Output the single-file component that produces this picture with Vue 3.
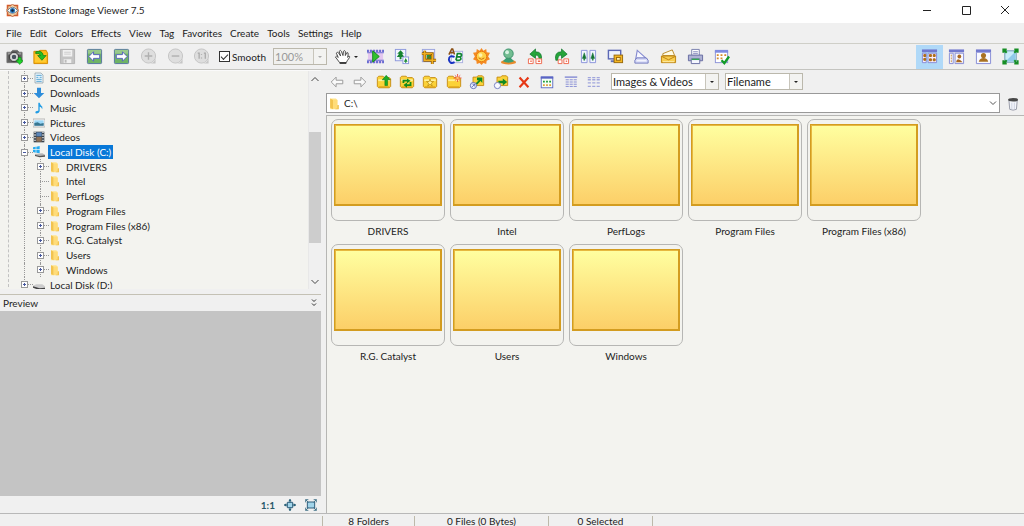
<script setup>
import { ref } from 'vue'

const menus = ['File', 'Edit', 'Colors', 'Effects', 'View', 'Tag', 'Favorites', 'Create', 'Tools', 'Settings', 'Help']

const folderShape = '<path d="M1.500 5V4L3 2.500h5L9.500 4h5.500L16.500 5.500V14L15 15.500H3L1.500 14z" fill="#fbd238" stroke="#c48a10"/><path d="M2.500 6h13v2h-13z" fill="#fff29a"/><path d="M3 14.500h12" stroke="#d99812"/>'
const zoomShape = '<circle cx="9" cy="8.500" r="7.500" fill="#dedede" stroke="#c4c4c4"/><path d="M11 16.500h5.500V11c-1 3-3 5-5.500 5.500z" fill="#c6c6c6"/>'
const greenBox = '<rect x="1.500" y="1.500" width="15" height="15" rx="1" fill="#6fb465" stroke="#5472a0"/><path d="M2 2h14v4H2z" fill="#98c98c"/>'
const windowShape = '<rect x="2.500" y="3.500" width="13" height="12" fill="#fff" stroke="#8c93d8"/><rect x="2" y="2" width="14" height="3" fill="#7f8be0"/>'

const art = {
  logo: '<path d="M1 1h16v16H1z" fill="#e8602c"/><path d="M9 0l2.600 2.600h3.800v3.800L18 9l-2.600 2.600v3.800h-3.800L9 18l-2.600-2.600H2.600v-3.800L0 9l2.600-2.600V2.600h3.800z" fill="#f3cfa2" stroke="#a8552f"/><path d="M2 9q7-9 14 0-7 8-14 0z" fill="#fff" stroke="#3c5878"/><circle cx="9" cy="9" r="3.500" fill="#2278bd"/><circle cx="9" cy="9" r="1.700" fill="#101c33"/>',
  camera: '<path d="M1 4.500h4l2-2h5l2 2h3v11H1z" fill="#606060" stroke="#777"/><path d="M2 5h14v2H2z" fill="#999"/><circle cx="8.500" cy="9.500" r="5" fill="#bbb" stroke="#333"/><circle cx="8.500" cy="9.500" r="3" fill="#4a525e" stroke="#eee"/><path d="M13 10h3v3h2.500L14.500 17.500 10.500 13H13z" fill="#20d52a" stroke="#09830f" stroke-width=".5"/>',
  open: '<path d="M2 3.500h5l1.500-1H15l1.500 3v11H2z" fill="#fcb915" stroke="#d48a00"/><path d="M3 6h5l1 1h6v8H3z" fill="#ffca32"/><path d="M4 4q7-2 8 4h3l-4.500 5L6 8h3Q8 5 4 6z" fill="#25bd26" stroke="#087611" stroke-width=".7"/>',
  save: '<path d="M1.500 1.500h15v15h-15z" fill="#c4c4c4" stroke="#b4b4b4"/><path d="M4 2h10v7H4zM5 12h8v4H5z" fill="#f0f0f0"/><path d="M5.500 4.500h7M5.500 6.500h7" stroke="#ccc"/><path d="M6 12.500h2v3H6z" fill="#bbb"/>',
  prev: greenBox + '<path d="M3 9l5-5v3h6.500v4H8v3z" fill="#fff" stroke="#5260bd"/>',
  next: greenBox + '<path d="M15 9l-5-5v3H3.500v4H10v3z" fill="#fff" stroke="#5260bd"/>',
  zoomin: zoomShape + '<path d="M5 8.500h8M9 4.500v8" stroke="#b0b0b0" stroke-width="1.500"/>',
  zoomout: zoomShape + '<path d="M5 8.500h8" stroke="#b0b0b0" stroke-width="1.500"/>',
  actual: zoomShape + '<path d="M5 5.500h1.500v6M11.500 5.500H13v6M9 6.500v1M9 10v1" fill="none" stroke="#a8a8a8" stroke-width="1.300"/>',
  hand: '<path d="M6 15.500L1.500 9.500q1-2 3 .500L2.500 5.500q1-2 2.200-.500L7 8.500 5.500 3.500q1.200-2 2.300 0L9.500 8l.5-4.500q1.500-1.500 2 0V8l1.500-3q1.800-.500 1.500 1.500L14.500 10l1-1.500q1.500 0 1 1.500L14 13.500l-1 2z" fill="#fff" stroke="#444"/><path d="M6 16h7" stroke="#222" stroke-width="1.500"/>',
  slideshow: '<path d="M1 2h16v14H1z" fill="#e3c6ef"/><path d="M0 3h18M0 15h18" stroke="#686dd0" stroke-width="2.500" stroke-dasharray="2 1.200"/><path d="M0 5h18M0 13h18" stroke="#686dd0"/><path d="M6 3l7 6-7 6z" fill="#31c12d" stroke="#178a20"/>',
  resize: '<rect x="2.500" y="1.500" width="11" height="12" fill="#f1f4ff" stroke="#8c98dc"/><path d="M8 2.500L4.500 6h2L4 9.500h3V12h2V9.500h3L9.500 6h2z" fill="#168430"/><rect x="10.500" y="9.500" width="6" height="7" fill="#fff" stroke="#8c98dc"/><path d="M13.500 10.500l-2 4H13V16h1v-1.500h1.500z" fill="#1d8b38"/>',
  crop: '<rect x="2.500" y="1.500" width="13" height="13" fill="#f3f3ff" stroke="#9aa3dd"/><path d="M7 7h5v5H7z" fill="#29913e"/><path d="M5 3v10h12M2 6h11v11" fill="none" stroke="#8e5900" stroke-width="3"/><path d="M5 3v10h12M2 6h11v11" fill="none" stroke="#f0b020" stroke-width="1.500"/><path d="M7 12l6-6" stroke="#8e5900"/>',
  drawing: '<rect x="4.500" y="3.500" width="12" height="12" fill="#f8f8ff" stroke="#aab0e0"/><path d="M2 7l3-6h1l2 6M3.500 5h4" fill="none" stroke="#8b5014" stroke-width="1.600"/><path d="M8 9.500Q2 7 2 12.500q1 5 6 2.500" fill="none" stroke="#1732c2" stroke-width="2"/><path d="M9.500 13l1.500-7h3q3 1 0 3.500h-3.500M11 9.500h3q2 2.500-1 3.500H9.500" fill="none" stroke="#108432" stroke-width="1.800"/>',
  adjust: '<path d="M9 0l2 3 3-2 .500 3.500L18 5l-2 4 2 3-3.500 1.500L14 17l-3-1-2 2-2-2-3 1-.500-3.500L0 12l2-3-2-4 3.500-.500L4 1l3 2z" fill="#f48a22"/><circle cx="9" cy="9" r="5.500" fill="#ffd24a" stroke="#e87810"/><circle cx="8" cy="7.500" r="2" fill="#fff3aa"/><path d="M6 10.500q3 3 6 0" fill="none" stroke="#c86910"/>',
  clone: '<ellipse cx="9" cy="15" rx="8" ry="2.500" fill="#e98b2e"/><path d="M7 10h4l4 4q-6 3-12 0z" fill="#3a9f73"/><circle cx="9" cy="6" r="5" fill="#72bd91" stroke="#399169"/><circle cx="7.500" cy="4.500" r="2" fill="#d9f3e3"/>',
  rotleft: '<path d="M15 13q2-9-6-9V1L3 6.500 9 11V7.500q4 0 4 5.500z" fill="#26a43a" stroke="#087025" stroke-width=".7"/><path d="M1.500 11.500h5v5h-5zM9.500 11.500h6v5h-6z" fill="#fff" stroke="#ef694f"/><path d="M3.500 14h1.500M11.500 14H14" stroke="#ef694f" stroke-width="1.500"/>',
  rotright: '<path d="M3 13Q1 4 9 4V1l6 5.500L9 11V7.500q-4 0-4 5.500z" fill="#26a43a" stroke="#087025" stroke-width=".7"/><path d="M5.500 12.500h4v4h-4zM11.500 11.500h5v5h-5z" fill="#fff" stroke="#ef694f"/><path d="M13.500 14h1.500" stroke="#ef694f" stroke-width="1.500"/>',
  compare: '<path d="M1.500 2.500h6v13h-6zM10.500 2.500h6v13h-6z" fill="#f3f6ff" stroke="#8a93da"/><path d="M4.500 5L2.500 11H4v2h1v-2h1.500zM13.500 5l-2 6H13v2h1v-2h1.500z" fill="#167434" stroke="#167434" stroke-width=".5"/>',
  wallpaper: '<rect x="1.500" y="2.500" width="13" height="9" fill="#eef3ff" stroke="#5c68b5" stroke-width="1.500"/><path d="M4 14h5" stroke="#6270b8" stroke-width="2"/><rect x="7.500" y="7.500" width="9" height="8" fill="#f5b824" stroke="#99690b"/><rect x="10" y="10" width="4" height="3" fill="#fff1b5" stroke="#99690b"/>',
  scan: '<path d="M4.500 2.500L14 11H3z" fill="#f8f8ff" stroke="#858bd0" stroke-width="1.200"/><path d="M2 13l2-2.500h10l2 2.500v3H2z" fill="#d7daf7" stroke="#7278be"/><path d="M4 13.500h10" stroke="#fff"/>',
  email: '<path d="M3 6l10-4 2.500 6H3z" fill="#fffbe5" stroke="#b98a28"/><path d="M1.500 8.500h15v7h-15z" fill="#f8cd50" stroke="#bd820d"/><path d="M2 9l7 3.500L16 9" fill="none" stroke="#bd820d"/><path d="M3 14.500h12" stroke="#fff0b0"/>',
  print: '<path d="M5 1.500h8V8H5z" fill="#fff" stroke="#777dac"/><path d="M1.500 7.500h15v6h-15z" fill="#adb1d4" stroke="#666ba0"/><path d="M4.500 11.500h9v5h-9z" fill="#f5f6ff" stroke="#666ba0"/><path d="M6.500 4h5M6.500 6h5" stroke="#8185ba"/><path d="M5 12h8" stroke="#33a653" stroke-width="1.500"/>',
  batch: windowShape + '<path d="M4 7.500h2M8 7.500h2M12 7.500h2M4 11h2M8 11h2" stroke="#d48c2c" stroke-width="2"/><path d="M9 13l3 3 5-7" fill="none" stroke="#149b29" stroke-width="2.500"/>',
  browser: '<path d="M1 3h16" stroke="#7078ce" stroke-width="3"/><path d="M1.500 5.500h4v10h-4zM7.500 5.500h9v10h-9z" fill="#f9efff" stroke="#858bd4"/><path d="M3 7h2v2H3zM3 11h2v2H3zM9 7h2v2H9zM13 7h2v2h-2zM9 11.500h2v2H9zM13 11.500h2v2h-2z" fill="#c57810" stroke="#a46510"/>',
  windowed: '<path d="M1 3h16" stroke="#7078ce" stroke-width="3"/><path d="M1.500 5.500h4v11h-4zM7.500 5.500h9v11h-9z" fill="#f9f9ff" stroke="#858bd4"/><path d="M3.500 7v9" stroke="#c5934d" stroke-dasharray="2 1"/><circle cx="12" cy="9" r="2" fill="#a86720"/><path d="M8.500 15q1-6 7 0z" fill="#a86720"/>',
  viewer: '<path d="M1 3h16" stroke="#7078ce" stroke-width="3"/><path d="M1.500 4.500v12h15v-12z" fill="#f9f9ff" stroke="#858bd4"/><circle cx="9" cy="8" r="2.700" fill="#a97122"/><path d="M4 14.500q1-4 5-4t5 4z" fill="#a97122"/>',
  fullscreen: '<rect x="3" y="3" width="12" height="12" fill="#c8ecfb" stroke="#6796b2"/><path d="M4 14L14 4v10z" fill="#8fc9ea"/><path d="M5 1.500H1.500V5M13 1.500h3.500V5M1.500 13v3.500H5M16.500 13v3.500H13M2 2l3 3M16 2l-3 3M2 16l3-3M16 16l-3-3" fill="none" stroke="#168e25" stroke-width="2.200"/>',
  back: '<path d="M2.500 9L8 3.500V7h7.500v4H8v3.500z" fill="#fafafa" stroke="#919191"/>',
  forward: '<path d="M15.500 9L10 3.500V7H2.500v4H10v3.500z" fill="#fafafa" stroke="#919191"/>',
  up: folderShape + '<path d="M10 13V6.500H7L11.500 1.500 16 6.500h-3V13z" fill="#1cac25" stroke="#087316" stroke-width=".6"/>',
  refresh: folderShape + '<path d="M5 10V7.500h5M13 9v3.500H8" fill="none" stroke="#138b1c" stroke-width="2"/><path d="M9 5l4 2.500-4 3zM9 9.500l-4 3 4 3z" fill="#138b1c"/>',
  favorite: folderShape + '<path d="M9 5.500l1 3h3l-2.500 2 1 3-2.500-2-2.500 2 1-3-2.500-2h3z" fill="#fff4a0" stroke="#b98500" stroke-width=".8"/>',
  newfolder: folderShape + '<path d="M13 0v9M8.500 4.500h9M10 1.500l6 6M16 1.500l-6 6" stroke="#ee4e37"/><circle cx="13" cy="4.500" r="1.500" fill="#ffc16e"/>',
  copyto: '<path d="M4.500 3.500h4L10 2h5l1.500 1.500V13h-12z" fill="#fbd238" stroke="#c48a10"/><path d="M7 11l4-4H9V4h6v6l-2-2-4 4z" fill="#108a22"/><circle cx="5" cy="13" r="3.500" fill="#eaf0ff" stroke="#5966b0"/><path d="M3.500 14.500l3-3M4 11.500h2.500V14" fill="none" stroke="#5966b0"/>',
  moveto: '<path d="M4.500 3.500h4L10 2h5l1.500 1.500V13h-12z" fill="#fbd238" stroke="#c48a10"/><path d="M6 7.500h5V5l5 4-5 4v-2.500H6z" fill="#108a22"/><circle cx="5" cy="13" r="3.500" fill="#f8faff" stroke="#6b75bd"/>',
  delete: '<path d="M4 4l10 11M14 4L4 15" stroke="#e63816" stroke-width="2.400"/>',
  thumbs: '<rect x="2.500" y="3.500" width="13" height="12" fill="#f5fff3" stroke="#5964c4"/><path d="M2 4h14" stroke="#5964c4" stroke-width="2.500"/><path d="M4.500 8.500h2M8 8.500h2M11.500 8.500h2" stroke="#1b9a38" stroke-width="2"/><path d="M4.500 12.500h2M8 12.500h2M11.500 12.500h2" stroke="#e09a3a" stroke-width="2"/>',
  details: '<path d="M2 3.500h14" stroke="#7d84d2" stroke-width="1.500"/><path d="M3 6.500h13M3 9h13M3 11.500h13M3 14h13" stroke="#7d84d2" stroke-dasharray="3.500 1"/>',
  list: '<path d="M2 4h14M2 6.500h14M2 10h14M2 14h14" stroke="#a0a5dc" stroke-width="1.500" stroke-dasharray="3.500 1.500"/>',
  trash: '<path d="M3.500 5l1 11q4 2 8 0l1-11z" fill="#f4f6fb" stroke="#8a8e9c"/><ellipse cx="8.500" cy="4.500" rx="6" ry="2" fill="#484848"/><path d="M7 8v8M10 8v8" stroke="#c8cddd"/>',
  documents: '<path d="M3 1.500h9l3 3v12H3z" fill="#eaf6fd" stroke="#8496a0"/><path d="M5 5h8M5 8h3M10 8h3M5 11h8M5 14h8" stroke="#58a6d3" stroke-width="1.500"/>',
  downloads: '<path d="M6 1h6v8h5l-8 8-8-8h5z" fill="#2d8dda"/>',
  music: '<path d="M8 1h2q1 4 4 6v4l-2-3-2-1v7q-1 4-6 3-2-4 4-4z" fill="#239de5"/>',
  pictures: '<path d="M0 3h18v12H0z" fill="#f9f9f9" stroke="#9c9c9c"/><path d="M2 5h14v8H2z" fill="#9bd7f7"/><path d="M2 9l5-1 4 2 5-1v4H2z" fill="#397690"/>',
  videos: '<path d="M1 1h16v16H1z" fill="#39444e"/><path d="M5 2h8v6H5z" fill="#5b86b8"/><path d="M5 9h8v7H5z" fill="#8e7055"/><path d="M3 1v16M15 1v16" stroke="#eee" stroke-width="2" stroke-dasharray="2 2"/>',
  windisk: '<path d="M0 2l4-1v4H0zM5 1l5-1v5H5zM0 6h4v4L0 9zM5 6h5v5l-5-1z" fill="#24aaf0"/><path d="M3 12l11-1 4 2v2l-8 1-7-3z" fill="#b4b4b4"/><path d="M3 13l7 2v2l-7-2zM10 15l8-1v2l-8 1z" fill="#545454"/>',
  disk: '<path d="M0 10l5-2h9l4 3v3l-8 2L0 12z" fill="#ccc"/><path d="M0 11l10 3v3L0 13zM10 14l8-1v2l-8 2z" fill="#444"/>',
  folder: '<path d="M3 2h8l2 2v13H3z" fill="#ffe58e"/><path d="M3 2l4 2v13l-4-2zM13 11h2v6h-5z" fill="#f2c34f"/><path d="M7 4h6v12H7z" fill="#ffdc79"/>',
  fit: '<path d="M5 5h8v8H5z" fill="#a1d4e9" stroke="#315f7d" stroke-width="1.500"/><path d="M9 0v5M9 13v5M0 9h5M13 9h5" fill="none" stroke="#286078" stroke-width="1.500"/><path d="M6.500 3.500h5L9 0zM6.500 14.500h5L9 18zM3.500 6.500v5L0 9zM14.500 6.500v5L18 9z" fill="#286078"/>',
  stretch: '<path d="M3.500 4.500h11v9h-11z" fill="#a1d4e9" stroke="#315f7d" stroke-width="1.500"/><path d="M1 5V1h4M13 1h4v4M1 13v4h4M17 13v4h-4M1 1l4 4M17 1l-4 4M1 17l4-4M17 17l-4-4" fill="none" stroke="#286078" stroke-width="1.200"/>'
}

const fileTools = [['camera', 'Acquire'], ['open', 'Open'], ['save', 'Save'], ['prev', 'Previous'], ['next', 'Next'], ['zoomin', 'Zoom in'], ['zoomout', 'Zoom out'], ['actual', 'Actual size']]
const editTools = [['slideshow', 'Slide show'], ['resize', 'Resize'], ['crop', 'Crop'], ['drawing', 'Draw'], ['adjust', 'Lighting'], ['clone', 'Clone'], ['rotleft', 'Rotate left'], ['rotright', 'Rotate right'], ['compare', 'Compare'], ['wallpaper', 'Wallpaper'], ['scan', 'Scan'], ['email', 'Email'], ['print', 'Print'], ['batch', 'Batch convert']]
const viewTools = [['browser', 'Browser'], ['windowed', 'Windowed'], ['viewer', 'Viewer'], ['fullscreen', 'Full screen']]
const folderTools = [['back', 'Back'], ['forward', 'Forward'], ['up', 'Up'], ['refresh', 'Refresh'], ['favorite', 'Favorites'], ['newfolder', 'New folder'], ['copyto', 'Copy to'], ['moveto', 'Move to'], ['delete', 'Delete'], ['thumbs', 'Thumbnails'], ['details', 'Details'], ['list', 'List']]

const tree = [
  { name: 'Documents', icon: 'documents', box: '+' },
  { name: 'Downloads', icon: 'downloads', box: '+' },
  { name: 'Music', icon: 'music', box: '+' },
  { name: 'Pictures', icon: 'pictures', box: '+' },
  { name: 'Videos', icon: 'videos', box: '+' },
  { name: 'Local Disk (C:)', icon: 'windisk', box: '-' },
  { name: 'DRIVERS', icon: 'folder', box: '+', child: true },
  { name: 'Intel', icon: 'folder', child: true },
  { name: 'PerfLogs', icon: 'folder', child: true },
  { name: 'Program Files', icon: 'folder', box: '+', child: true },
  { name: 'Program Files (x86)', icon: 'folder', box: '+', child: true },
  { name: 'R.G. Catalyst', icon: 'folder', box: '+', child: true },
  { name: 'Users', icon: 'folder', box: '+', child: true },
  { name: 'Windows', icon: 'folder', box: '+', child: true },
  { name: 'Local Disk (D:)', icon: 'disk', box: '+' }
]
const folders = tree.filter((row) => row.child).map((row) => row.name)
const selected = ref('Local Disk (C:)')
const mode = ref('browser')
const smooth = ref(true)
const path = ref('C:\\')
</script>

<template>
  <div class="app">
    <header class="titlebar">
      <svg class="logo" viewBox="0 0 18 18" v-html="art.logo"></svg>
      <h1>FastStone Image Viewer 7.5</h1>
      <div class="caption">
        <button aria-label="Minimize"><svg viewBox="0 0 10 10"><path d="M1 5.500h8" /></svg></button>
        <button aria-label="Maximize"><svg viewBox="0 0 10 10"><path d="M1.500 1.500h8v8h-8z" /></svg></button>
        <button aria-label="Close"><svg viewBox="0 0 10 10"><path d="M1 1l8 8M9 1L1 9" /></svg></button>
      </div>
    </header>

    <nav class="menubar">
      <button v-for="m in menus" :key="m">{{ m }}</button>
    </nav>

    <div class="toolbar">
      <div class="group file-group">
        <button v-for="[id, label] in fileTools" :key="id" class="tool" :aria-label="label">
          <svg viewBox="0 0 18 18" v-html="art[id]"></svg>
        </button>
      </div>
      <label class="smooth"><input v-model="smooth" type="checkbox" />Smooth</label>
      <div class="combo zoom">
        <select aria-label="Zoom" disabled><option>100%</option></select>
        <span class="drop"></span>
      </div>
      <button class="tool hand" aria-label="Pan"><svg viewBox="0 0 18 18" v-html="art.hand"></svg></button>
      <button class="more" aria-label="Pan options"><i class="caret"></i></button>
      <div class="group edit-group">
        <button v-for="[id, label] in editTools" :key="id" class="tool" :aria-label="label">
          <svg viewBox="0 0 18 18" v-html="art[id]"></svg>
        </button>
      </div>
      <div class="group view-group">
        <button v-for="[id, label] in viewTools" :key="id" class="tool mode" :class="{ active: mode === id }" :aria-label="label" @click="mode = id">
          <svg viewBox="0 0 18 18" v-html="art[id]"></svg>
        </button>
      </div>
    </div>

    <main class="main">
      <aside class="side">
        <div class="tree-pane">
          <ul class="tree">
            <li v-for="row in tree" :key="row.name" :class="{ child: row.child }">
              <span class="joint"><span v-if="row.box" class="box" :class="{ open: row.box === '-' }"></span></span>
              <svg class="tree-icon" viewBox="0 0 18 18" v-html="art[row.icon]"></svg>
              <button class="node" :class="{ selected: selected === row.name }" @click="selected = row.name">{{ row.name }}</button>
            </li>
          </ul>
          <div class="scroll">
            <button aria-label="Scroll up"><svg viewBox="0 0 8 6"><path d="M.500 5L4 1.500 7.500 5" /></svg></button>
            <div class="track"><div class="thumb"></div></div>
            <button aria-label="Scroll down"><svg viewBox="0 0 8 6"><path d="M.500 1L4 4.500 7.500 1" /></svg></button>
          </div>
        </div>
        <section class="preview">
          <div class="preview-head">
            <h2>Preview</h2>
            <button aria-label="Collapse preview"><svg viewBox="0 0 6 8"><path d="M1 .500l2 2 2-2M1 4.500l2 2 2-2" /></svg></button>
          </div>
          <div class="preview-area"></div>
          <div class="preview-tools">
            <button class="one">1:1</button>
            <button class="tool" aria-label="Best fit"><svg viewBox="0 0 18 18" v-html="art.fit"></svg></button>
            <button class="tool" aria-label="Stretch"><svg viewBox="0 0 18 18" v-html="art.stretch"></svg></button>
          </div>
        </section>
      </aside>

      <section class="browser">
        <div class="browse-bar">
          <div class="group folder-group">
            <button v-for="[id, label] in folderTools" :key="id" class="tool" :aria-label="label">
              <svg viewBox="0 0 18 18" v-html="art[id]"></svg>
            </button>
          </div>
          <div class="combo filter">
            <select aria-label="File filter"><option>Images &amp; Videos</option></select>
            <span class="drop"></span>
          </div>
          <div class="combo sort">
            <select aria-label="Sort by"><option>Filename</option></select>
            <span class="drop"></span>
          </div>
        </div>
        <div class="path-row">
          <div class="path">
            <svg class="path-icon" viewBox="0 0 18 18" v-html="art.folder"></svg>
            <input v-model="path" aria-label="Path" />
            <button aria-label="Path history"><svg viewBox="0 0 8 6"><path d="M1 1.500l3 3 3-3" /></svg></button>
          </div>
          <button class="tool trash" aria-label="Recycle bin"><svg viewBox="0 0 18 18" v-html="art.trash"></svg></button>
        </div>
        <div class="grid">
          <figure v-for="name in folders" :key="name">
            <div class="card"><div class="picture"></div></div>
            <figcaption>{{ name }}</figcaption>
          </figure>
        </div>
      </section>
    </main>

    <footer class="status">
      <span class="lead"></span>
      <span class="count">8 Folders</span>
      <span class="files">0 Files (0 Bytes)</span>
      <span class="chosen">0 Selected</span>
      <span class="rest"></span>
    </footer>
  </div>
</template>

<style>
html, body { background: #f0f0f0; }
body { margin: 0; overflow: hidden; }
</style>

<style scoped>
.app, .app * { box-sizing: border-box; }
.app {
  height: 100vh;
  display: flex;
  flex-direction: column;
  background: #f0f0f0;
  color: #1c1c1c;
  font: 10px/14px Lato, "Open Sans", sans-serif;
}
button, input, select { font: inherit; color: inherit; margin: 0; padding: 0; border: 0; background: none; border-radius: 0; }
h1, h2, ul, figure { margin: 0; padding: 0; font-size: 10px; font-weight: 400; }
svg { display: block; }

.titlebar { flex: none; height: 23px; display: flex; align-items: center; gap: 4px; padding: 0 0 3px 6px; background: #fff; }
.logo { width: 13px; height: 13px; }
.caption { margin-left: auto; display: flex; height: 20px; }
.caption button { width: 39px; display: flex; align-items: center; justify-content: center; }
.caption svg { width: 10px; height: 10px; fill: none; stroke: #222; }

.menubar { flex: none; height: 21px; display: flex; align-items: center; gap: 8px; padding-left: 6px; border-bottom: 1px solid #cfcfc8; }

.toolbar { flex: none; height: 26px; display: flex; align-items: center; padding-left: 5px; border-bottom: 1px solid #c4c4c0; }
.group { display: flex; align-items: center; justify-content: space-between; }
.tool { flex: none; width: 18px; height: 18px; display: flex; align-items: center; justify-content: center; }
.tool svg { width: 17px; height: 17px; }
.file-group { width: 206px; }
.edit-group { width: 365px; margin-left: 5px; }
.view-group { margin-left: auto; }
.mode { width: 27px; height: 24px; }
.mode.active { background: #b0d9f8; }
.smooth { display: flex; align-items: center; gap: 2px; width: 54px; margin-left: 8px; }
.smooth input { appearance: none; width: 11px; height: 11px; border: 1px solid #333; background: #fff; display: grid; place-items: center; }
.smooth input:checked::before { content: ""; width: 6px; height: 3px; border: solid #333; border-width: 0 0 1px 1px; transform: translateY(-1px) rotate(-45deg); }
.combo { display: flex; height: 17px; border: 1px solid #bbb8ac; background: #fff; font-size: 11px; }
.combo select { flex: 1; min-width: 0; appearance: none; padding-left: 1px; outline: 0; }
.drop { width: 13px; border-left: 1px solid #c8c5bb; background: #f3f3f1; display: grid; place-items: center; pointer-events: none; }
.drop::before, .caret { content: ""; border: 2px solid transparent; border-top-color: #222; border-bottom: 0; }
.zoom { width: 54px; background: #f0f0ee; }
.zoom select { color: #999; opacity: 1; }
.zoom .drop::before { border-top-color: #aaa; }
.hand { margin-left: 6px; }
.more { width: 10px; height: 18px; display: grid; place-items: center; }

.main { flex: 1; min-height: 0; display: flex; }
.side { flex: none; width: 321px; display: flex; flex-direction: column; margin-right: 5px; }
.tree-pane { flex: none; height: 219px; display: flex; overflow: hidden; border-top: 1px solid #fafafa; background: #f3f3ef; }
.tree { flex: 1; height: 221px; display: grid; grid-template-rows: repeat(15, 1fr); list-style: none; margin-left: 8px; border-left: 1px dashed #c2c2c2; }
.tree li { display: flex; align-items: stretch; min-height: 0; padding-left: 11px; }
.tree li.child::before { content: ""; width: 15px; margin-left: 4px; margin-right: -4px; border-left: 1px dotted #999; }
.joint { flex: none; width: 13px; display: grid; grid-template-columns: 4px 9px; align-items: center; }
.joint::before { content: ""; grid-area: 1 / 2; align-self: stretch; border-left: 1px dotted #999; }
.joint::after { content: ""; grid-area: 1 / 2; border-top: 1px dotted #999; }
.box { grid-area: 1 / 1 / 2 / 3; margin-left: 1px; z-index: 1; width: 7px; height: 7px; border: 1px solid #999; background: linear-gradient(#46589e, #46589e) center / 3px 1px no-repeat, linear-gradient(#46589e, #46589e) center / 1px 3px no-repeat, #fff; }
.box.open { background: linear-gradient(#46589e, #46589e) center / 3px 1px no-repeat, #fff; }
.tree-icon { flex: none; align-self: center; width: 12px; height: 12px; margin-right: 3px; }
.node { align-self: center; height: 14px; padding: 0 2px; white-space: nowrap; line-height: 14px; }
.node.selected { background: #0878d8; color: #fff; }
.scroll { flex: none; width: 13px; display: flex; flex-direction: column; background: #f0f0f0; border-left: 1px solid #e8e8e8; }
.scroll button { height: 15px; display: grid; place-items: center; }
.scroll svg { width: 8px; height: 6px; fill: none; stroke: #444; }
.track { flex: 1; padding-top: 46px; }
.thumb { height: 111px; background: #cdcdcd; }

.preview { flex: 1; min-height: 0; display: flex; flex-direction: column; margin-top: 5px; border-top: 1px solid #c4c1b5; }
.preview-head { flex: none; height: 16px; display: flex; align-items: center; justify-content: space-between; padding: 0 4px 0 3px; }
.preview-head svg { width: 6px; height: 8px; fill: none; stroke: #333; }
.preview-area { flex: 1; background: #c4c4c4; }
.preview-tools { flex: none; height: 17px; display: flex; align-items: center; justify-content: flex-end; gap: 3px; padding-right: 1px; }
.preview-tools svg { width: 12px; height: 12px; }
.one { font-weight: 700; color: #28586a; margin-right: 3px; }

.browser { flex: 1; min-width: 0; display: flex; flex-direction: column; }
.browse-bar { flex: none; height: 23px; display: flex; align-items: center; padding-left: 2px; }
.browse-bar .tool svg { width: 16px; height: 16px; }
.folder-group { width: 275px; }
.filter { width: 108px; margin-left: 8px; }
.sort { width: 78px; margin-left: 6px; }
.path-row { flex: none; display: flex; align-items: center; gap: 4px; }
.path { flex: 1; height: 20px; display: flex; align-items: center; background: #fff; border: 1px solid #999; }
.path-icon { width: 13px; height: 13px; margin: 0 3px 0 1px; }
.path input { flex: 1; min-width: 0; outline: 0; }
.path button { width: 13px; height: 16px; display: grid; place-items: center; }
.path button svg { width: 8px; height: 6px; fill: none; stroke: #555; }
.trash { margin-right: 2px; }
.trash svg { width: 15px; height: 15px; }
.grid { flex: 1; min-height: 0; margin-top: 2px; padding: 3px 4px; display: grid; grid-template-columns: repeat(auto-fill, 114px); grid-auto-rows: 120px; gap: 5px; align-content: start; background: #f3f3ef; border: solid #b6b6b4; border-width: 1px 0 0 1px; }
.card { height: 102px; padding: 4px 2px; border: 1px solid #b6b6b4; border-radius: 7px; }
.picture { height: 82px; border: solid #d39c20; border-width: 1px 2px 2px 1px; background: linear-gradient(#ffffa0, #fccf68); box-shadow: inset 1px 1px #e6b840; }
figcaption { margin-top: 3px; line-height: 14px; text-align: center; }

.status { flex: none; height: 13px; display: flex; border-top: 1px solid #b8b8b8; line-height: 10px; padding-top: 2px; }
.status span { border-right: 1px solid #bdb9aa; text-align: center; white-space: nowrap; }
.lead { width: 323px; }
.count { width: 92px; }
.files { width: 134px; }
.chosen { width: 104px; }
.status .rest { flex: 1; border: 0; }
</style>
